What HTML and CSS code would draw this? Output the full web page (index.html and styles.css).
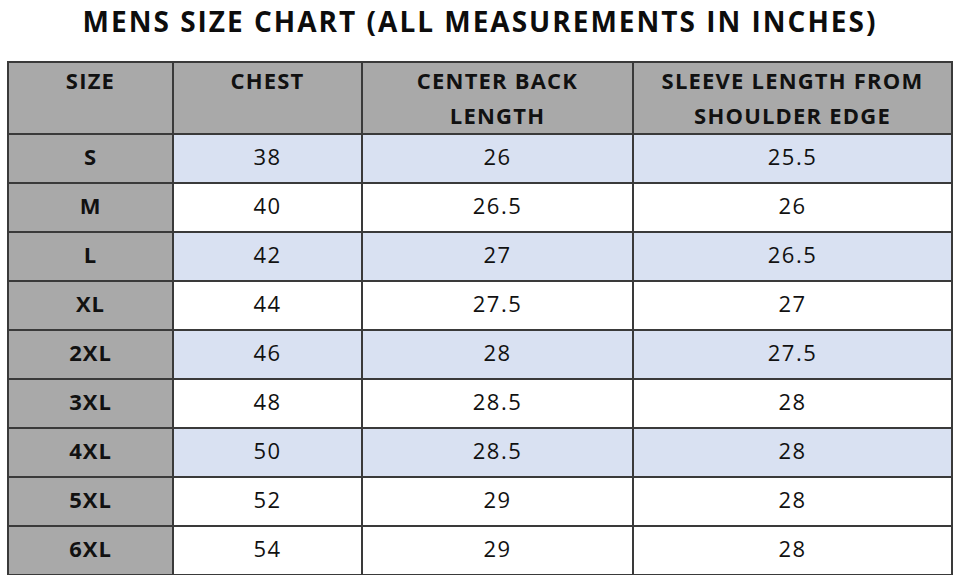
FILE: index.html
```html
<!DOCTYPE html>
<html>
<head>
<meta charset="utf-8">
<link rel="stylesheet" href="styles.css">
</head>
<body>
<h1 class="title">MENS SIZE CHART (ALL MEASUREMENTS IN INCHES)</h1>
<table class="chart">
  <colgroup>
    <col class="c1"><col class="c2"><col class="c3"><col class="c4">
  </colgroup>
  <thead>
    <tr>
      <th>SIZE</th>
      <th>CHEST</th>
      <th>CENTER BACK<br>LENGTH</th>
      <th>SLEEVE LENGTH FROM<br>SHOULDER EDGE</th>
    </tr>
  </thead>
  <tbody>
    <tr class="blue"><td class="size">S</td><td>38</td><td>26</td><td>25.5</td></tr>
    <tr><td class="size">M</td><td>40</td><td>26.5</td><td>26</td></tr>
    <tr class="blue"><td class="size">L</td><td>42</td><td>27</td><td>26.5</td></tr>
    <tr><td class="size">XL</td><td>44</td><td>27.5</td><td>27</td></tr>
    <tr class="blue"><td class="size">2XL</td><td>46</td><td>28</td><td>27.5</td></tr>
    <tr><td class="size">3XL</td><td>48</td><td>28.5</td><td>28</td></tr>
    <tr class="blue"><td class="size">4XL</td><td>50</td><td>28.5</td><td>28</td></tr>
    <tr><td class="size">5XL</td><td>52</td><td>29</td><td>28</td></tr>
    <tr><td class="size">6XL</td><td>54</td><td>29</td><td>28</td></tr>
  </tbody>
</table>
</body>
</html>
```

FILE: styles.css
```css
html, body {
  margin: 0;
  padding: 0;
  background: #ffffff;
}
body {
  padding: 0 8px;
  font-family: "Open Sans", "DejaVu Sans", sans-serif;
  color: #111111;
}
.title {
  margin: 0;
  height: 61px;
  padding-top: 2px;
  box-sizing: border-box;
  text-align: center;
  font-size: 28px;
  letter-spacing: 2px;
  line-height: 38px;
  font-weight: 700;
  color: #0d0d0d;
}
.chart {
  width: 944px;
  border-collapse: collapse;
  table-layout: fixed;
  margin-left: -1px;
}
.c1 { width: 165px; }
.c2 { width: 189px; }
.c3 { width: 271px; }
.c4 { width: 319px; }
.chart th, .chart td {
  border: 2px solid #3a3a3a;
  text-align: center;
  padding: 0;
}
.chart th {
  background: #a9a9a9;
  font-size: 22px;
  font-weight: 700;
  letter-spacing: 1.2px;
  line-height: 35px;
  height: 70px;
  vertical-align: top;
  color: #111111;
}
.chart td {
  height: 42px;
  font-size: 22px;
  letter-spacing: 1.5px;
  line-height: 30px;
  vertical-align: middle;
  padding-bottom: 5px;
  background: #ffffff;
}
.chart tr.blue td {
  background: #d9e1f2;
}
.chart td.size, .chart tr.blue td.size {
  background: #a9a9a9;
  font-weight: 700;
  letter-spacing: 1px;
}
```
